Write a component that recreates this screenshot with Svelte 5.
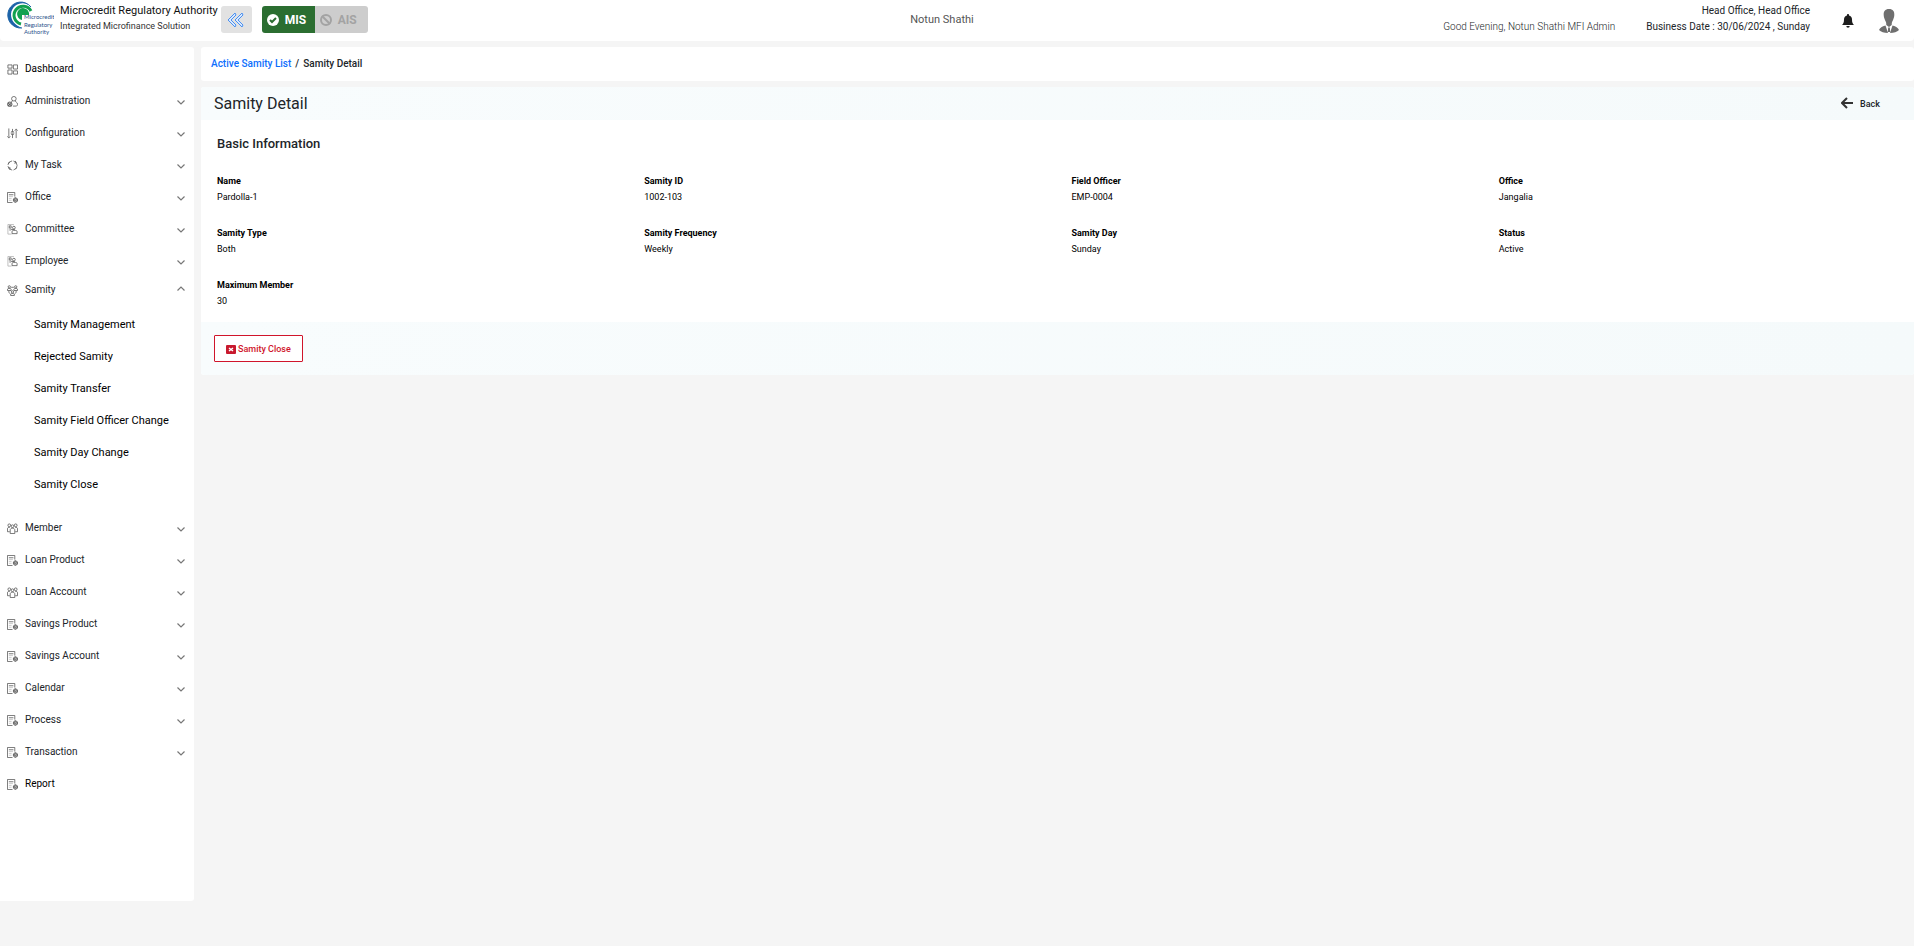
<script lang="ts">
  type Item = { label: string; icon: string; leaf?: boolean; children?: string[] };

  const menu: Item[] = [
    { label: 'Dashboard', icon: 'grid', leaf: true },
    { label: 'Administration', icon: 'admin' },
    { label: 'Configuration', icon: 'sliders' },
    { label: 'My Task', icon: 'task' },
    { label: 'Office', icon: 'doc' },
    { label: 'Committee', icon: 'people' },
    { label: 'Employee', icon: 'people' },
    {
      label: 'Samity',
      icon: 'samity',
      children: [
        'Samity Management',
        'Rejected Samity',
        'Samity Transfer',
        'Samity Field Officer Change',
        'Samity Day Change',
        'Samity Close',
      ],
    },
    { label: 'Member', icon: 'group' },
    { label: 'Loan Product', icon: 'doc' },
    { label: 'Loan Account', icon: 'group' },
    { label: 'Savings Product', icon: 'doc' },
    { label: 'Savings Account', icon: 'doc' },
    { label: 'Calendar', icon: 'doc' },
    { label: 'Process', icon: 'doc' },
    { label: 'Transaction', icon: 'doc' },
    { label: 'Report', icon: 'doc', leaf: true },
  ];

  const fields = [
    ['Name', 'Pardolla-1'],
    ['Samity ID', '1002-103'],
    ['Field Officer', 'EMP-0004'],
    ['Office', 'Jangalia'],
    ['Samity Type', 'Both'],
    ['Samity Frequency', 'Weekly'],
    ['Samity Day', 'Sunday'],
    ['Status', 'Active'],
    ['Maximum Member', '30'],
  ];

  let open = $state('Samity');
  const toggle = (label: string) => (open = open === label ? '' : label);
</script>

{#snippet icon(name: string)}
  <svg class="icon" viewBox="0 0 24 24" fill="none" stroke="#4a4a4a" stroke-width="1.6" aria-hidden="true">
    {#if name === 'grid'}
      <path d="M2 2h9v7H2zM2 13h9v9H2zM14 2h9v9h-9zM14 15h9v7h-9z" />
    {:else if name === 'admin'}
      <circle cx="15" cy="6" r="5" />
      <path d="M12 10c0 3-3 2-4 4M18 10c0 4 5 3 5 8 0 2-1 4-3 4h-7" />
      <circle cx="6" cy="18" r="5" fill="#bbb" />
      <path d="M2 15l8 7M10 15l-8 7" />
    {:else if name === 'sliders'}
      <path d="M4 1v18M12 2v6M12 14v8M20 5v17M1 18l3 4 3-4M8 11h8M9 8h6M9 14h6M17 6l3-4 3 4" />
    {:else if name === 'task'}
      <circle cx="12" cy="12" r="10" stroke-dasharray="13 3" />
      <path d="M18 2l2 4-4 1M3 17h4l-1 4M2 8l4-3M18 20l3-3" />
    {:else if name === 'doc'}
      <path d="M17 10V1H1v22h11" />
      <path d="M4 6h10" />
      <path d="M4 10h9M4 14h6M4 18h6" stroke="#bbb" />
      <path d="M14 15l4-3 5 3v5l-5 3-4-3z" fill="#aaa" />
      <circle cx="18" cy="17" r="2" fill="#fff" />
    {:else if name === 'people'}
      <path d="M15 1H2v21h8" stroke="#aaa" />
      <path d="M5 4h4v5H5zM5 13h4" />
      <circle cx="15" cy="8" r="3" />
      <path d="M11 21v-4c0-3 2-3 4-3h3c3 0 4 1 4 3v4zM9 12h8" />
    {:else if name === 'samity'}
      <circle cx="5" cy="4" r="2.500" />
      <circle cx="19" cy="4" r="2.500" />
      <circle cx="12" cy="15" r="2.500" />
      <path d="M1 12V9c0-2 8-2 8 0v3zM15 12V9c0-2 8-2 8 0v3zM8 23v-3c0-2 8-2 8 0v3zM9 5h6M4 13c0 4 1 5 3 6M20 13c0 4-1 5-3 6" />
    {:else if name === 'group'}
      <circle cx="5" cy="5" r="3" />
      <circle cx="19" cy="5" r="3" />
      <circle cx="12" cy="7" r="3" />
      <path d="M7 23v-8c0-5 10-5 10 0v8zM6 19H1v-6c0-3 2-4 5-3M18 19h5v-6c0-3-2-4-5-3" />
    {/if}
  </svg>
{/snippet}

<div class="page">
  <header class="topbar">
    <div class="brand">
      <svg class="logo" width="48" height="36" viewBox="0 0 48 36" aria-hidden="true">
        <path d="M25 7A13 13 0 1 0 16 28C9 25 5 21 5 14C6 3 19 0 25 7Z" fill="#1c63a8" />
        <path d="M25 7A13 13 0 1 0 16 28" fill="none" stroke="#1c63a8" stroke-width="1" />
        <path d="M24 8C14 2 5 10 7 18C8 23 11 26 16 27L19 19L27 12Z" fill="#fff" />
        <path d="M25 11A9 9 0 1 0 15 24" fill="none" stroke="#12a150" stroke-width="3" />
        <path d="M23 15A6 6 0 1 0 16 20V15Z" fill="#12a150" />
        <g font-family="Lato, sans-serif" font-size="6" fill="#27508a">
          <text x="18" y="19">Microcredit</text>
          <text x="18" y="27">Regulatory</text>
          <text x="18" y="34">Authority</text>
        </g>
      </svg>
      <div class="names">
        <div class="org">Microcredit Regulatory Authority</div>
        <div class="tagline">Integrated Microfinance Solution</div>
      </div>
      <button class="collapse" aria-label="Collapse menu">
        <svg width="18" height="16" viewBox="0 0 18 16" fill="#d9e9ff" stroke="#4a90f0" stroke-width="1" stroke-linejoin="round" aria-hidden="true">
          <path d="M8 1l1 2-5 5 5 5-1 2-7-7zM15 1l1 2-5 5 5 5-1 2-7-7z" />
        </svg>
      </button>
      <div class="switch">
        <button class="mis">
          <svg width="12" height="12" viewBox="0 0 12 12" aria-hidden="true">
            <circle cx="6" cy="6" r="6" fill="#fff" />
            <path d="M3 6l2 2 4-4" fill="none" stroke="#2b6e31" stroke-width="2" />
          </svg>
          MIS
        </button>
        <button class="ais" disabled>
          <svg width="12" height="12" viewBox="0 0 12 12" fill="none" stroke="#a3a3a3" stroke-width="2" aria-hidden="true">
            <circle cx="6" cy="6" r="5" />
            <path d="M2 2l8 8" />
          </svg>
          AIS
        </button>
      </div>
    </div>
    <div class="institution">Notun Shathi</div>
    <div class="account">
      <div class="greeting">Good Evening, Notun Shathi MFI Admin</div>
      <div class="office">
        <div>Head Office, Head Office</div>
        <div>Business Date : 30/06/2024 , Sunday</div>
      </div>
      <button class="plain bell" aria-label="Notifications">
        <svg width="12" height="14" viewBox="0 0 12 14" fill="#1d1d1d" aria-hidden="true">
          <path d="M6 0c.6 0 1 .4 1 1v.4c2 .4 3 2 3 4 0 3 .6 4 2 5.600H0C1.400 9.400 2 8.400 2 5.400c0-2 1-3.600 3-4V1c0-.6.4-1 1-1zM4.300 12h3.400a1.700 1.700 0 0 1-3.400 0z" />
        </svg>
      </button>
      <button class="plain" aria-label="Profile">
        <svg width="20" height="24" viewBox="0 0 20 24" fill="#6f6f6f" aria-hidden="true">
          <path d="M10 0c4 0 5.500 2.500 5.300 6-.1 2-.4 2.600-.9 4-.6 2-1.400 2.600-1.600 4l-.1 2-2.700 2-2.700-2-.1-2c-.2-1.400-1-2-1.600-4-.5-1.400-.8-2-.9-4C4.500 2.500 6 0 10 0z" />
          <path d="M6.500 16.500L9 24C5 24 2 23 0 21c1-2.500 3-3.300 6.500-4.500zM13.500 16.500L11 24c4 0 7-1 9-3-1-2.500-3-3.300-6.500-4.500zM9.200 18.500h1.600l.4 4.500h-2.400z" />
        </svg>
      </button>
    </div>
  </header>

  <div class="columns">
    <nav class="sidebar" aria-label="Main">
      {#each menu as item (item.label)}
        {#if item.leaf}
          <a class="row leaf" href="#top">{@render icon(item.icon)}<span>{item.label}</span></a>
        {:else}
          <button class="row" class:open={open === item.label} aria-expanded={open === item.label} onclick={() => toggle(item.label)}>
            {@render icon(item.icon)}
            <span>{item.label}</span>
            <svg class="chevron" width="8" height="5" viewBox="0 0 8 5" fill="none" stroke="#777" stroke-width="1.2" aria-hidden="true">
              <path d={open === item.label ? 'M.5 4.500L4 1l3.500 3.500' : 'M.5 .5L4 4l3.500-3.500'} />
            </svg>
          </button>
          {#if open === item.label && item.children}
            <div class="sub">
              {#each item.children as child}
                <a href="#top">{child}</a>
              {/each}
            </div>
          {/if}
        {/if}
      {/each}
    </nav>

    <main>
      <div class="crumbs">
        <a href="#top">Active Samity List</a><span class="slash">/</span><span>Samity Detail</span>
      </div>
      <section class="card">
        <div class="title">
          <h1>Samity Detail</h1>
          <button class="plain back">
            <svg width="12" height="14" viewBox="0 0 12 14" fill="none" stroke="#333" stroke-width="2" aria-hidden="true">
              <path d="M12 6H2M6 1L1 6l5 5" />
            </svg>
            Back
          </button>
        </div>
        <div class="body">
          <h2>Basic Information</h2>
          <dl>
            {#each fields as [name, value]}
              <div>
                <dt>{name}</dt>
                <dd>{value}</dd>
              </div>
            {/each}
          </dl>
        </div>
        <div class="actions">
          <button class="close">
            <svg width="10" height="10" viewBox="0 0 10 10" aria-hidden="true">
              <rect y="1" width="10" height="9" rx="1" fill="#c8192e" />
              <path d="M3 4l4 3M7 4l-4 3" stroke="#fff" stroke-width="1.5" />
            </svg>
            Samity Close
          </button>
        </div>
      </section>
    </main>
  </div>
</div>

<style>
  :global(body) {
    margin: 0;
    background: #f5f5f5;
  }
  .page {
    font-family: Roboto, sans-serif;
    font-size: 10px;
    line-height: 16px;
    color: #212529;
  }
  button {
    font: inherit;
    color: inherit;
    border: 0;
    cursor: pointer;
  }
  a {
    color: inherit;
    text-decoration: none;
  }
  svg {
    flex: none;
  }
  .plain {
    padding: 0;
    background: none;
    display: flex;
    align-items: center;
  }
  .topbar {
    display: grid;
    grid-template-columns: 1fr auto 1fr;
    height: 41px;
    background: #fff;
    border-radius: 0 0 4px 4px;
  }
  .brand {
    display: flex;
    align-items: flex-start;
    padding-left: 6px;
  }
  .names {
    margin: 3px 3px 0 6px;
    white-space: nowrap;
  }
  .org {
    font-size: 11px;
    color: #111;
  }
  .tagline {
    font-size: 9px;
    line-height: 14px;
    color: #333;
  }
  .collapse {
    display: flex;
    align-items: center;
    justify-content: center;
    width: 31px;
    height: 27px;
    margin-top: 6px;
    padding: 0;
    border-radius: 3px;
    background: #e2e2e2;
  }
  .switch {
    display: flex;
    height: 27px;
    margin: 6px 0 0 10px;
    border-radius: 3px;
    overflow: hidden;
  }
  .switch button {
    display: flex;
    align-items: center;
    gap: 6px;
    width: 53px;
    padding: 0 5px;
    font-size: 12px;
    font-weight: 700;
  }
  .mis {
    background: #2b6e31;
    color: #fff;
  }
  .ais {
    background: #cdcdcd;
    color: #a3a3a3;
  }
  .institution {
    padding: 12px 30px 0 0;
    font-size: 11px;
    color: #555;
  }
  .account {
    display: flex;
    justify-content: flex-end;
    padding-right: 15px;
    white-space: nowrap;
  }
  .greeting {
    margin: 19px 31px 0 0;
    font-weight: 300;
  }
  .office {
    padding-top: 3px;
    margin-right: 32px;
    text-align: right;
  }
  .bell {
    margin-right: 25px;
  }
  .columns {
    display: flex;
    align-items: flex-start;
    gap: 7px;
    padding-top: 6px;
  }
  .sidebar {
    flex: 0 0 194px;
    box-sizing: border-box;
    min-height: calc(100vh - 92px);
    padding-top: 6px;
    background: #fff;
    border-radius: 0 3px 3px 0;
  }
  .row {
    display: flex;
    align-items: center;
    gap: 7px;
    box-sizing: border-box;
    width: 100%;
    height: 32px;
    padding: 0 9px 0 7px;
    background: none;
    text-align: left;
  }
  .row.open {
    height: 26px;
  }
  .row.leaf {
    color: #000;
  }
  .icon {
    width: 11px;
    height: 11px;
  }
  .chevron {
    margin: 3px 0 0 auto;
  }
  .open .chevron {
    margin: 0 0 4px auto;
  }
  .sub {
    padding: 6px 0 11px 34px;
    color: #000;
    font-size: 11px;
  }
  .sub a {
    display: block;
    line-height: 32px;
  }
  main {
    flex: 1;
    min-width: 0;
  }
  .crumbs {
    display: flex;
    align-items: center;
    height: 34px;
    padding-left: 10px;
    background: #fff;
    border-radius: 3px;
    font-weight: 500;
  }
  .crumbs a {
    color: #0d6efd;
  }
  .slash {
    padding: 0 4px;
  }
  .card {
    margin-top: 6px;
    background: #fff;
    border-radius: 3px;
    overflow: hidden;
  }
  .title,
  .actions {
    background: linear-gradient(90deg, #f8fcfd, #f5fafb);
  }
  .title {
    display: flex;
    align-items: center;
    justify-content: space-between;
    height: 33px;
    padding: 0 34px 0 13px;
  }
  h1 {
    margin: 0;
    font-size: 16px;
    font-weight: 400;
  }
  .back {
    gap: 7px;
    font-size: 9px;
    font-weight: 500;
  }
  .body {
    padding: 16px 16px 13px;
  }
  h2 {
    margin: 0 0 21px;
    font-size: 13px;
    font-weight: 500;
  }
  dl {
    display: grid;
    grid-template-columns: repeat(4, 1fr);
    gap: 20px 28px;
    margin: 0;
    font-size: 9px;
    color: #000;
  }
  dt {
    font-weight: 700;
  }
  dd {
    margin: 0;
  }
  .actions {
    padding: 13px;
  }
  .close {
    display: flex;
    align-items: center;
    gap: 2px;
    height: 27px;
    padding: 0 11px;
    border: 1px solid #d0152b;
    border-radius: 1px;
    background: #fff;
    color: #d0152b;
    font-size: 9px;
    font-weight: 500;
  }
</style>
